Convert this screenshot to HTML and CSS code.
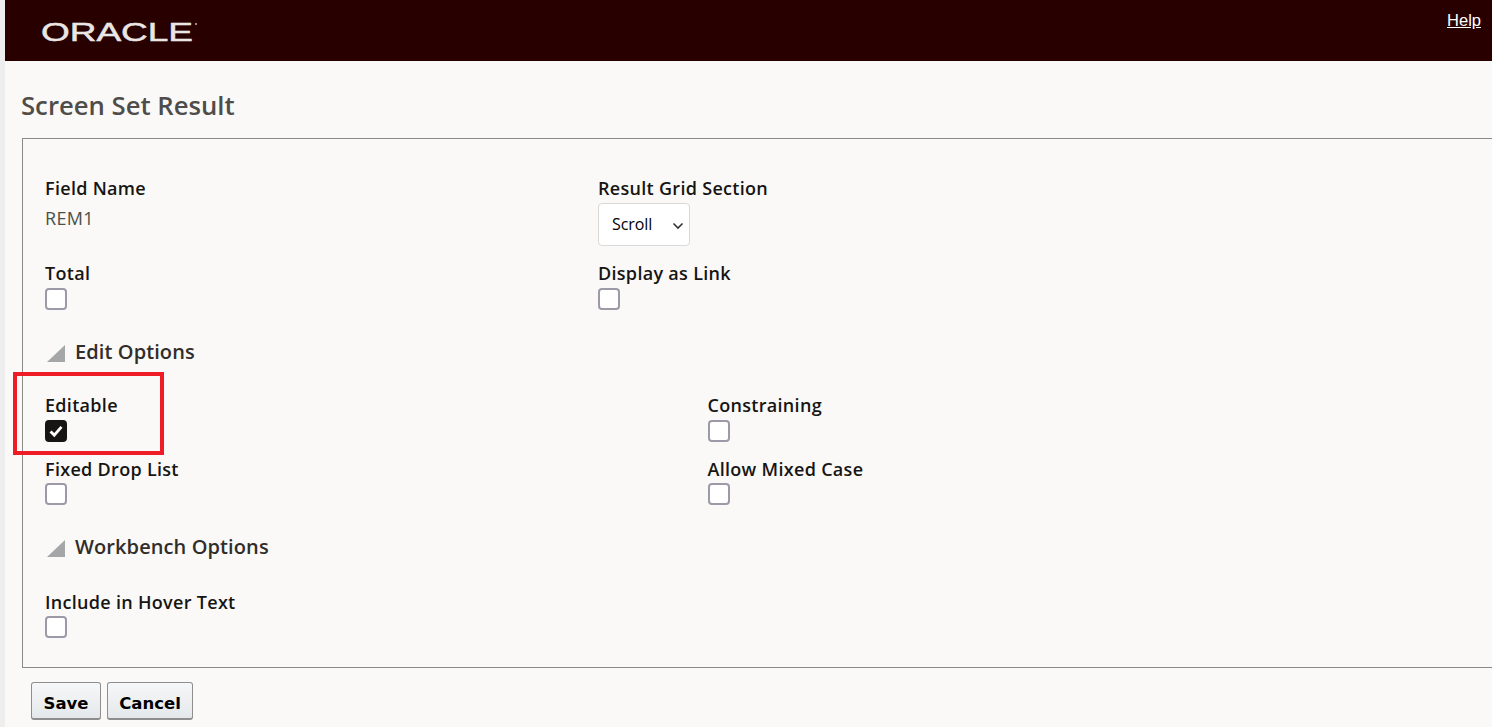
FILE: index.html
```html
<!DOCTYPE html>
<html lang="en">
<head>
<meta charset="utf-8">
<title>Screen Set Result</title>
<link rel="stylesheet" href="styles.css">
</head>
<body>
<div class="page">
  <header class="banner">
    <svg class="logo" width="160" height="30" viewBox="0 0 160 30" role="img" aria-label="ORACLE">
      <text x="0" y="25" textLength="152" lengthAdjust="spacingAndGlyphs" class="logo-text">ORACLE</text>
      <circle cx="155" cy="8" r="1" fill="#bbb"/>
    </svg>
    <a class="help" href="#">Help</a>
  </header>
  <main class="content">
    <h1 class="title">Screen Set Result</h1>
    <section class="box">
      <div class="row row-top">
        <div class="field f-a">
          <label class="lbl">Field Name</label>
          <div class="value">REM1</div>
        </div>
        <div class="field">
          <label class="lbl">Result Grid Section</label>
          <select class="sel"><option>Scroll</option></select>
        </div>
      </div>
      <div class="row row-total">
        <div class="field f-a">
          <label class="lbl">Total</label>
          <span class="cb"></span>
        </div>
        <div class="field">
          <label class="lbl">Display as Link</label>
          <span class="cb"></span>
        </div>
      </div>
      <div class="section-head sh-edit">
        <svg class="tri" width="18" height="18" viewBox="0 0 18 18"><path d="M0 17 L18 0 V17 Z" fill="#a4a6a8"/></svg>
        <span>Edit Options</span>
      </div>
      <div class="row row-edit">
        <div class="field f-b">
          <label class="lbl">Editable</label>
          <span class="cb checked">
            <svg width="16" height="16" viewBox="0 0 14 14"><path d="M2.2 7.4 L5.5 10.6 L11.8 3.4" fill="none" stroke="#fff" stroke-width="2.5"/></svg>
          </span>
        </div>
        <div class="field">
          <label class="lbl">Constraining</label>
          <span class="cb"></span>
        </div>
      </div>
      <div class="row row-fixed">
        <div class="field f-b">
          <label class="lbl">Fixed Drop List</label>
          <span class="cb cb-tight"></span>
        </div>
        <div class="field">
          <label class="lbl">Allow Mixed Case</label>
          <span class="cb cb-tight"></span>
        </div>
      </div>
      <div class="section-head sh-work">
        <svg class="tri" width="18" height="18" viewBox="0 0 18 18"><path d="M0 17 L18 0 V17 Z" fill="#a4a6a8"/></svg>
        <span>Workbench Options</span>
      </div>
      <div class="row row-hover">
        <div class="field f-a">
          <label class="lbl">Include in Hover Text</label>
          <span class="cb cb-tight"></span>
        </div>
      </div>
    </section>
    <div class="actions">
      <button class="btn btn-save" type="button">Save</button>
      <button class="btn btn-cancel" type="button">Cancel</button>
    </div>
  </main>
</div>
<div class="highlight"></div>
</body>
</html>
```
FILE: styles.css
```css
* { box-sizing: border-box; }
html, body { margin: 0; padding: 0; height: 100%; overflow: hidden; }
body {
  background: #faf9f7;
  font-family: "Open Sans", "Noto Sans", sans-serif;
  color: #161513;
  position: relative;
}
.page {
  border-left: 5px solid #eeeeee;
  height: 727px;
}
.banner {
  height: 61px;
  background: #280000;
  display: flex;
  justify-content: space-between;
  align-items: flex-start;
  padding: 0 11px 0 36px;
}
.logo { margin-top: 16px; display: block; }
.logo-text {
  font-family: "Liberation Sans", sans-serif;
  font-size: 26px;
  font-weight: 400;
  fill: #e9e6e3;
  stroke: #e9e6e3;
  stroke-width: 0.5px;
}
.help {
  font-family: "Liberation Sans", sans-serif;
  font-size: 16.5px;
  color: #ffffff;
  margin-top: 11px;
  line-height: 18px;
}
.content { padding: 0 0 0 16px; }
.title {
  margin: 0;
  padding-top: 28px;
  height: 77px;
  font-size: 25.7px;
  line-height: 33px;
  font-weight: 600;
  color: #4f4c49;
}
.box {
  margin-left: 1px;
  width: 1500px;
  height: 530px;
  border: 1px solid #8a8a86;
  padding-left: 22px;
}
.row { display: flex; }
.row-top { padding-top: 37px; height: 122px; }
.row-total { height: 71px; }
.row-edit { height: 64px; }
.row-fixed { height: 77px; }
.field { display: flex; flex-direction: column; align-items: flex-start; }
.f-a { width: 553px; }
.f-b { width: 662.5px; }
.lbl {
  font-size: 18px;
  font-weight: 600;
  line-height: 24px;
  letter-spacing: 0.3px;
  color: #161513;
}
.value {
  font-size: 18px;
  line-height: 24px;
  margin-top: 6px;
  letter-spacing: 0.3px;
  color: #4d5048;
}
.sel {
  margin-top: 3px;
  width: 92px;
  height: 43px;
  appearance: none;
  background: #ffffff url("data:image/svg+xml,%3Csvg xmlns='http://www.w3.org/2000/svg' width='12' height='8' viewBox='0 0 12 8'%3E%3Cpath d='M1.5 1.5 L6 6 L10.5 1.5' fill='none' stroke='%23333' stroke-width='1.6'/%3E%3C/svg%3E") no-repeat 73px 18px;
  border: 1px solid #d9d9d9;
  border-radius: 4px;
  font-family: "Open Sans", sans-serif;
  font-size: 16px;
  letter-spacing: -0.1px;
  color: #000000;
  padding: 0 0 2px 13px;
}
.cb {
  display: flex;
  align-items: center;
  justify-content: center;
  width: 22px;
  height: 22px;
  margin-top: 3px;
  background: #ffffff;
  border: 2px solid #9b9aa6;
  border-radius: 4px;
}
.cb-tight { margin-top: 2px; }
.cb.checked { background: #161513; border-color: #161513; }
.section-head {
  display: flex;
  align-items: center;
  gap: 10px;
  font-size: 20px;
  font-weight: 600;
  line-height: 26px;
  letter-spacing: 0.1px;
  color: #312d2a;
}
.sh-edit { height: 40px; margin-bottom: 21px; }
.sh-work { height: 26px; margin-bottom: 30px; }
.tri { margin: 3px 0 0 2px; }
.actions { display: flex; gap: 6px; padding: 14px 0 0 10px; }
.btn {
  height: 38px;
  padding: 5px 0 0;
  border: 1px solid #8e8e8e;
  border-radius: 3px;
  border-bottom-width: 2px;
  background: linear-gradient(#f6f7f8, #e5e8ea);
  font-family: "DejaVu Sans", sans-serif;
  font-weight: 700;
  font-size: 16.5px;
  color: #000;
}
.btn-save { width: 70px; }
.btn-cancel { width: 86px; }
.highlight {
  position: absolute;
  left: 13px;
  top: 372px;
  width: 151px;
  height: 83px;
  border: 4px solid #ee1c25;
  pointer-events: none;
}
```
